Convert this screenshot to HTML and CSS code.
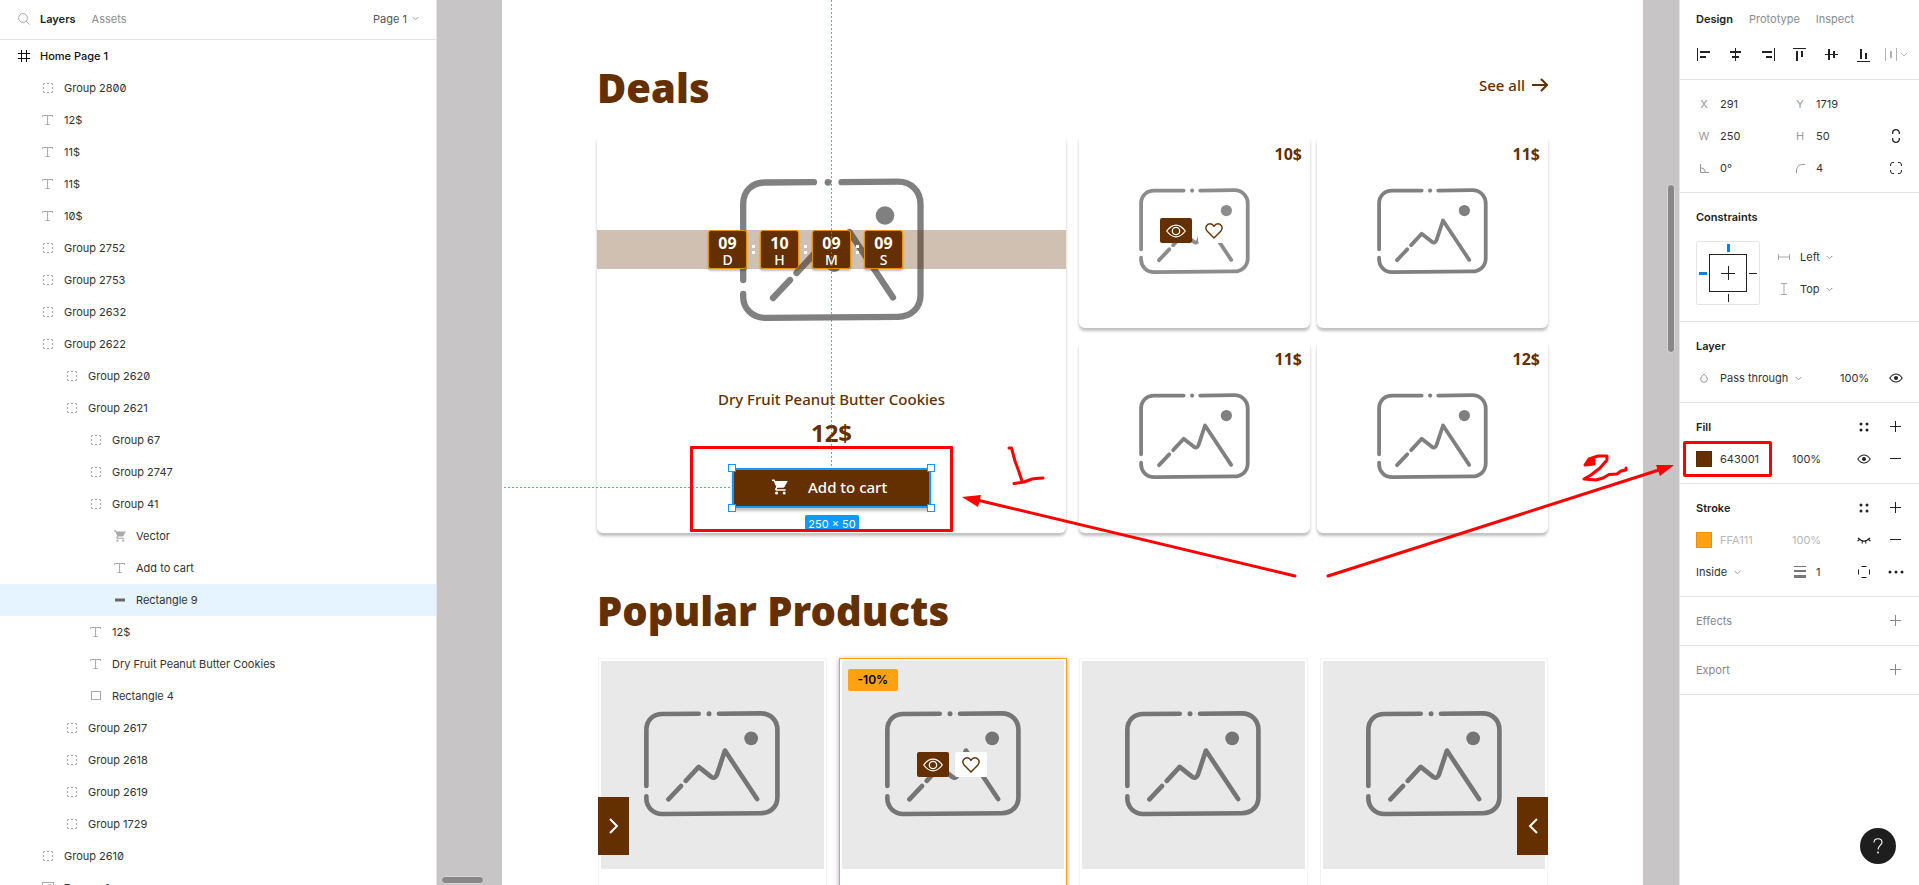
FILE: index.html
```html
<!DOCTYPE html>
<html lang="en">
<head>
<meta charset="utf-8">
<title>Home Page 1</title>
<link rel="stylesheet" href="styles.css">
</head>
<body>
<svg class="sprite" aria-hidden="true">
  <symbol id="i-group" viewBox="0 0 12 12"><path d="M1.500 3V1.500H3M5 1.500h2M9 1.500h1.500V3M10.500 5v2M10.500 9v1.500H9M7 10.500H5M3 10.500H1.500V9M1.500 7V5" fill="none" stroke="currentColor"/></symbol>
  <symbol id="i-text" viewBox="0 0 12 12"><path d="M.5 3V1.500h10V3M5.500 1.500v9M3.500 10.500h4" fill="none" stroke="currentColor"/></symbol>
  <symbol id="i-frame" viewBox="0 0 12 12"><path d="M3.500 0v12M8.500 0v12M0 3.500h12M0 8.500h12" fill="none" stroke="currentColor"/></symbol>
  <symbol id="i-rect" viewBox="0 0 12 12"><rect x="1.500" y="1.500" width="9" height="8" fill="none" stroke="currentColor"/></symbol>
  <symbol id="i-bar" viewBox="0 0 12 12"><path d="M1 6h10" fill="none" stroke="currentColor" stroke-width="3"/></symbol>
  <symbol id="i-image" viewBox="0 0 12 12"><rect x=".5" y=".5" width="11" height="11" fill="none" stroke="currentColor"/><circle cx="8" cy="4" r="1.500" fill="none" stroke="currentColor"/><path d="M1 10l3-4 4 5" fill="none" stroke="currentColor"/></symbol>
  <symbol id="i-cart" viewBox="1 2 21 20"><path d="M7 18a2 2 0 1 0 0 4 2 2 0 0 0 0-4zM1 2v2h2l3.600 7.590-1.350 2.450C4.500 15.400 5.500 17 7 17h12v-2H7.420l-.2-.3.900-1.700h7.450c.75 0 1.410-.41 1.750-1.030L21.700 4H5.210l-.94-2zM17 18a2 2 0 1 0 0 4 2 2 0 0 0 0-4z" fill="currentColor"/></symbol>
  <symbol id="i-search" viewBox="0 0 12 12"><circle cx="5" cy="5" r="4.400" fill="none" stroke="currentColor"/><path d="M8.200 8.200l3.400 3.400" fill="none" stroke="currentColor"/></symbol>
  <symbol id="i-chevron" viewBox="0 0 7 5"><path d="M.6.9L3.500 3.800 6.400.9" fill="none" stroke="currentColor"/></symbol>
  <symbol id="i-photo" viewBox="0 0 184 143">
    <g fill="none" stroke="currentColor" stroke-width="6.300" stroke-linecap="round" stroke-linejoin="round">
      <path d="M3.200 102V26C3.200 13 12 4.500 25 4.500L74 4.200M101.500 4.200L158 3.700C171 3.700 180.500 13 180.500 26V117C180.500 130 171 138.500 158 138.800L25 139.800C12 139.800 3.200 130 3.200 119V116"/>
      <path d="M33 120L50 102M56.500 95L74 76 91 89.500Q96 93 98.500 87L109.500 54 153 119.500"/>
    </g>
    <circle cx="88" cy="4.300" r="3.400" fill="currentColor"/><circle cx="145" cy="37.500" r="9.300" fill="currentColor"/>
  </symbol>
  <symbol id="i-view" viewBox="0 0 20 14"><path d="M.7 7Q5 1.200 10 1.200T19.300 7Q15 12.800 10 12.800T.7 7z" fill="none" stroke="currentColor" stroke-width="1.200"/><circle cx="10" cy="7" r="3.700" fill="none" stroke="currentColor" stroke-width="1.300"/></symbol>
  <symbol id="i-heart" viewBox="0 0 18 16"><path d="M9 15L2.300 8.300C-.8 4.600 2 .8 5 .8c1.800 0 3.200 1 4 2.500C9.800 1.800 11.200.8 13 .8c3 0 5.800 3.800 2.700 7.500z" fill="none" stroke="currentColor" stroke-width="1.400" stroke-linejoin="round"/></symbol>
  <symbol id="i-eye" viewBox="0 0 14 10"><path d="M.8 5Q3.500 1 7 1T13.200 5Q10.500 9 7 9T.8 5z" fill="none" stroke="currentColor" stroke-width="1.100"/><circle cx="7" cy="5" r="2" fill="currentColor"/></symbol>
  <symbol id="i-eye-off" viewBox="0 0 14 10"><path d="M1 3Q7 9 13 3M2.500 4.500L.5 6M5.500 6L5 8.500M8.500 6L9 8.500M11.500 4.500L13.500 6" fill="none" stroke="currentColor" stroke-width="1.200"/></symbol>
  <symbol id="i-plus" viewBox="0 0 12 12"><path d="M5.500 0v11M0 5.500h11" stroke="currentColor"/></symbol>
  <symbol id="i-minus" viewBox="0 0 12 12"><path d="M0 5.500h11" stroke="currentColor"/></symbol>
  <symbol id="i-styles" viewBox="0 0 10 10"><g fill="currentColor"><circle cx="2" cy="2" r="1.500"/><circle cx="8" cy="2" r="1.500"/><circle cx="2" cy="8" r="1.500"/><circle cx="8" cy="8" r="1.500"/></g></symbol>
</svg>

<div class="editor">
  <aside class="layers-panel">
    <header class="layers-head">
      <button class="tool" aria-label="Search"><svg class="s12"><use href="#i-search"/></svg></button>
      <button class="tab tab-on">Layers</button>
      <button class="tab">Assets</button>
      <button class="tab page-pick">Page 1 <svg class="chev"><use href="#i-chevron"/></svg></button>
    </header>
    <ul class="tree">
      <li class="layer root"><svg class="s12"><use href="#i-frame"/></svg>Home Page 1</li>
      <li class="layer d1"><svg class="s12"><use href="#i-group"/></svg>Group 2800</li>
      <li class="layer d1"><svg class="s12"><use href="#i-text"/></svg>12$</li>
      <li class="layer d1"><svg class="s12"><use href="#i-text"/></svg>11$</li>
      <li class="layer d1"><svg class="s12"><use href="#i-text"/></svg>11$</li>
      <li class="layer d1"><svg class="s12"><use href="#i-text"/></svg>10$</li>
      <li class="layer d1"><svg class="s12"><use href="#i-group"/></svg>Group 2752</li>
      <li class="layer d1"><svg class="s12"><use href="#i-group"/></svg>Group 2753</li>
      <li class="layer d1"><svg class="s12"><use href="#i-group"/></svg>Group 2632</li>
      <li class="layer d1"><svg class="s12"><use href="#i-group"/></svg>Group 2622</li>
      <li class="layer d2"><svg class="s12"><use href="#i-group"/></svg>Group 2620</li>
      <li class="layer d2"><svg class="s12"><use href="#i-group"/></svg>Group 2621</li>
      <li class="layer d3"><svg class="s12"><use href="#i-group"/></svg>Group 67</li>
      <li class="layer d3"><svg class="s12"><use href="#i-group"/></svg>Group 2747</li>
      <li class="layer d3"><svg class="s12"><use href="#i-group"/></svg>Group 41</li>
      <li class="layer d4"><svg class="s12"><use href="#i-cart"/></svg>Vector</li>
      <li class="layer d4"><svg class="s12"><use href="#i-text"/></svg>Add to cart</li>
      <li class="layer d4 selected"><svg class="s12"><use href="#i-bar"/></svg>Rectangle 9</li>
      <li class="layer d3"><svg class="s12"><use href="#i-text"/></svg>12$</li>
      <li class="layer d3"><svg class="s12"><use href="#i-text"/></svg>Dry Fruit Peanut Butter Cookies</li>
      <li class="layer d3"><svg class="s12"><use href="#i-rect"/></svg>Rectangle 4</li>
      <li class="layer d2"><svg class="s12"><use href="#i-group"/></svg>Group 2617</li>
      <li class="layer d2"><svg class="s12"><use href="#i-group"/></svg>Group 2618</li>
      <li class="layer d2"><svg class="s12"><use href="#i-group"/></svg>Group 2619</li>
      <li class="layer d2"><svg class="s12"><use href="#i-group"/></svg>Group 1729</li>
      <li class="layer d1"><svg class="s12"><use href="#i-group"/></svg>Group 2610</li>
      <li class="layer d1 strong"><svg class="s12"><use href="#i-image"/></svg>Banner 1</li>
    </ul>
  </aside>

  <main class="canvas">
    <div class="artboard">
      <section class="deals">
        <header class="section-head">
          <h2 class="title">Deals</h2>
          <a class="see-all" href="#">See all
            <svg width="16" height="14" viewBox="0 0 16 14"><path d="M0 7h15M9 1l6 6-6 6" fill="none" stroke="currentColor" stroke-width="2"/></svg></a>
        </header>
        <div class="deal-grid">
          <article class="card hero">
            <div class="hero-media">
              <svg class="photo photo-l"><use href="#i-photo"/></svg>
              <div class="timer">
                <div class="unit"><b>09</b>D</div><span class="colon"></span>
                <div class="unit"><b>10</b>H</div><span class="colon"></span>
                <div class="unit"><b>09</b>M</div><span class="colon"></span>
                <div class="unit"><b>09</b>S</div>
              </div>
            </div>
            <h3 class="name">Dry Fruit Peanut Butter Cookies</h3>
            <p class="hero-price">12$</p>
            <div class="buy">
              <button class="add"><svg width="16" height="16"><use href="#i-cart"/></svg>Add to cart</button>
              <span class="guide-v"></span><span class="guide-h"></span>
              <span class="selection"><i class="h tl"></i><i class="h tr"></i><i class="h bl"></i><i class="h br"></i></span>
              <span class="size">250 × 50</span>
              <span class="mark mark-button"></span>
            </div>
          </article>
          <article class="card small"><svg class="photo photo-s light"><use href="#i-photo"/></svg><p class="price">10$</p>
            <div class="actions"><button class="act act-view" aria-label="View"><svg width="22" height="14"><use href="#i-view"/></svg></button><button class="act" aria-label="Like"><svg width="18" height="16"><use href="#i-heart"/></svg></button></div></article>
          <article class="card small"><svg class="photo photo-s"><use href="#i-photo"/></svg><p class="price">11$</p></article>
          <article class="card small"><svg class="photo photo-s"><use href="#i-photo"/></svg><p class="price">11$</p></article>
          <article class="card small"><svg class="photo photo-s"><use href="#i-photo"/></svg><p class="price">12$</p></article>
        </div>
      </section>
      <section class="popular">
        <h2 class="title">Popular Products</h2>
        <div class="products">
          <article class="product"><div class="thumb"><svg class="photo photo-m"><use href="#i-photo"/></svg></div></article>
          <article class="product featured"><div class="thumb"><svg class="photo photo-m"><use href="#i-photo"/></svg></div>
            <span class="discount">-10%</span>
            <div class="actions"><button class="act act-view" aria-label="View"><svg width="22" height="14"><use href="#i-view"/></svg></button><button class="act" aria-label="Like"><svg width="18" height="16"><use href="#i-heart"/></svg></button></div></article>
          <article class="product"><div class="thumb"><svg class="photo photo-m"><use href="#i-photo"/></svg></div></article>
          <article class="product"><div class="thumb"><svg class="photo photo-m"><use href="#i-photo"/></svg></div></article>
          <button class="slide slide-l" aria-label="Next"><svg width="10" height="16" viewBox="0 0 10 16"><path d="M1 1l7 7-7 7" fill="none" stroke="currentColor" stroke-width="2"/></svg></button>
          <button class="slide slide-r" aria-label="Previous"><svg width="10" height="16" viewBox="0 0 10 16"><path d="M9 1L2 8l7 7" fill="none" stroke="currentColor" stroke-width="2"/></svg></button>
        </div>
      </section>
    </div>
    <span class="scroll scroll-v"></span><span class="scroll scroll-h"></span>
  </main>

  <aside class="design-panel">
    <nav class="design-tabs"><button class="tab tab-on">Design</button><button class="tab">Prototype</button><button class="tab">Inspect</button></nav>
    <section class="align">
      <button class="tool" aria-label="Align left"><svg width="14" height="14"><path d="M.5 0v13" class="ln"/><path d="M3 4h10M3 9h6" class="th"/></svg></button>
      <button class="tool" aria-label="Align centre"><svg width="14" height="14"><path d="M6.500 0v13" class="ln"/><path d="M1 4h11M3 9h7" class="th"/></svg></button>
      <button class="tool" aria-label="Align right"><svg width="14" height="14"><path d="M13.500 0v13" class="ln"/><path d="M1 4h10M5 9h6" class="th"/></svg></button>
      <button class="tool" aria-label="Align top"><svg width="14" height="14"><path d="M0 .5h13" class="ln"/><path d="M4 3v10M9 3v6" class="th"/></svg></button>
      <button class="tool" aria-label="Align middle"><svg width="14" height="14"><path d="M0 6.500h13" class="ln"/><path d="M4 1v11M9 3v7" class="th"/></svg></button>
      <button class="tool" aria-label="Align bottom"><svg width="14" height="14"><path d="M0 13.500h13" class="ln"/><path d="M4 1v10M9 5v6" class="th"/></svg></button>
      <button class="tool faint" aria-label="Distribute"><svg width="22" height="14"><path d="M.5 0v13M11.500 0v13M16 5l3 3 3-3" class="ln"/><path d="M6 3v7" class="th"/></svg></button>
    </section>
    <section class="section">
      <div class="row">
        <label class="key" for="fx">X</label><input class="val w2" id="fx" value="291">
        <label class="key" for="fy">Y</label><input class="val w2" id="fy" value="1719">
      </div>
      <div class="row">
        <label class="key" for="fw">W</label><input class="val w2" id="fw" value="250">
        <label class="key" for="fh">H</label><input class="val w2" id="fh" value="50">
        <button class="tool" aria-label="Constrain proportions"><svg width="8" height="14"><path d="M.7 5V3.700a3.300 3 0 0 1 6.600 0V5M.7 9v1.300a3.300 3 0 0 0 6.600 0V9" class="dash"/></svg></button>
      </div>
      <div class="row">
        <label class="key" for="fr" aria-label="Rotation"><svg width="9" height="9"><path d="M.5 0v8.500H9M.5 3.500Q5 4 5.500 8.500" class="ln"/></svg></label><input class="val w2" id="fr" value="0°">
        <label class="key" for="fc" aria-label="Corner radius"><svg width="9" height="9"><path d="M.5 9V7Q.5.500 7 .5h2" class="ln"/></svg></label><input class="val w2" id="fc" value="4">
        <button class="tool" aria-label="Independent corners"><svg width="12" height="12"><path d="M.5 4V3Q.5.500 3 .5h1M8 .5h1Q11.500.500 11.500 3v1M11.500 8v1q0 2.500-2.500 2.500H8M4 11.500H3Q.5 11.500.500 9V8" class="ln"/></svg></button>
      </div>
    </section>
    <section class="section">
      <div class="row"><h4 class="head">Constraints</h4></div>
      <div class="constraints">
        <svg class="pin-box" width="64" height="64"><rect x=".5" y=".5" width="63" height="63" rx="2" fill="#fff" stroke="#e5e5e5"/><rect x="13.500" y="13.500" width="37" height="37" fill="none" stroke="#222"/><path d="M25 32.500h14M32.500 25v14M53 32.500h8M32.500 53v8" stroke="#222"/><path d="M32.500 3v8M3 32.500h8" stroke="#0a80e8" stroke-width="3"/></svg>
        <div class="axes">
          <div class="axis"><svg width="12" height="6"><path d="M.5 0v6M11.500 0v6M0 3h12" class="ln"/></svg><select class="pick" aria-label="Horizontal"><option>Left</option></select><svg class="chev"><use href="#i-chevron"/></svg></div>
          <div class="axis"><svg width="12" height="12"><path d="M3 .5h6M3 11.500h6M6 0v12" class="ln"/></svg><select class="pick" aria-label="Vertical"><option>Top</option></select><svg class="chev"><use href="#i-chevron"/></svg></div>
        </div>
      </div>
    </section>
    <section class="section">
      <div class="row"><h4 class="head">Layer</h4></div>
      <div class="row">
        <span class="key"><svg width="8" height="10"><path d="M4 1Q.6 4.300.600 6a3.400 3.300 0 0 0 6.800 0Q7.400 4.300 4 1z" class="ln"/></svg></span>
        <div class="combo"><select class="pick" aria-label="Blend mode"><option>Pass through</option></select><svg class="chev"><use href="#i-chevron"/></svg></div>
        <input class="val opacity" aria-label="Layer opacity" value="100%">
        <button class="tool" aria-label="Hide layer"><svg width="14" height="10"><use href="#i-eye"/></svg></button>
      </div>
    </section>
    <section class="section">
      <div class="row"><h4 class="head">Fill</h4><button class="tool" aria-label="Fill styles"><svg width="10" height="10"><use href="#i-styles"/></svg></button><button class="tool" aria-label="Add fill"><svg class="s12"><use href="#i-plus"/></svg></button></div>
      <div class="row">
        <span class="key"><span class="swatch brown"></span></span><input class="val hex" aria-label="Fill colour" value="643001"><input class="val w2" aria-label="Fill opacity" value="100%">
        <button class="tool" aria-label="Hide fill"><svg width="14" height="10"><use href="#i-eye"/></svg></button><button class="tool" aria-label="Remove fill"><svg class="s12"><use href="#i-minus"/></svg></button>
        <span class="mark mark-fill"></span>
      </div>
    </section>
    <section class="section">
      <div class="row"><h4 class="head">Stroke</h4><button class="tool" aria-label="Stroke styles"><svg width="10" height="10"><use href="#i-styles"/></svg></button><button class="tool" aria-label="Add stroke"><svg class="s12"><use href="#i-plus"/></svg></button></div>
      <div class="row off">
        <span class="key"><span class="swatch orange"></span></span><input class="val hex" aria-label="Stroke colour" value="FFA111"><input class="val w2" aria-label="Stroke opacity" value="100%">
        <button class="tool" aria-label="Show stroke"><svg width="14" height="10"><use href="#i-eye-off"/></svg></button><button class="tool" aria-label="Remove stroke"><svg class="s12"><use href="#i-minus"/></svg></button>
      </div>
      <div class="row">
        <div class="combo inset"><select class="pick" aria-label="Stroke position"><option>Inside</option></select><svg class="chev"><use href="#i-chevron"/></svg></div>
        <label class="key dark" for="sw" aria-label="Stroke width"><svg width="12" height="12"><path d="M0 .5h12" class="ln"/><path d="M0 5h12" class="th"/><path d="M0 10.500h12" stroke="currentColor" stroke-width="3"/></svg></label><input class="val w1" id="sw" value="1">
        <button class="tool" aria-label="Stroke sides"><svg width="12" height="12"><path d="M3.500.500h5M3.500 11.500h5M.5 3.500v5M11.500 3.500v5" class="ln"/></svg></button>
        <button class="tool" aria-label="More"><svg width="16" height="4"><g fill="currentColor"><circle cx="2" cy="2" r="1.500"/><circle cx="8" cy="2" r="1.500"/><circle cx="14" cy="2" r="1.500"/></g></svg></button>
      </div>
    </section>
    <section class="section"><div class="row"><h4 class="head idle">Effects</h4><button class="tool idle" aria-label="Add effect"><svg class="s12"><use href="#i-plus"/></svg></button></div></section>
    <section class="section"><div class="row"><h4 class="head idle">Export</h4><button class="tool idle" aria-label="Add export"><svg class="s12"><use href="#i-plus"/></svg></button></div></section>
    <button class="help" aria-label="Help"><svg width="10" height="16" viewBox="0 0 10 16"><path d="M1 4.500C1 2 2.800.700 5 .7S9 2 9 4.300C9 7.300 5 7.500 5 11.500" fill="none" stroke="currentColor" stroke-width="1.100"/><circle cx="5" cy="14.500" r=".9" fill="currentColor"/></svg></button>
  </aside>

  <svg class="notes" width="720" height="140" viewBox="960 445 720 140" aria-hidden="true">
    <g fill="none" stroke="#f00" stroke-width="3" stroke-linecap="round" stroke-linejoin="round">
      <path d="M975 499.500L1295 576M1328 576L1662 469"/>
      <path d="M1009 448H1011.500L1015 461 1019 472 1022 481M1014 483.500L1024 482 1032 479 1036 478.500 1043 478"/>
      <path d="M1585 465L1589 459 1598 456 1607 456 1607 460 1600 468 1591 475 1584 479 1596 480 1603 478 1609 474.500 1617 474 1621 471 1626 470V468M1585 465L1594 464 1594 459 1589 463"/>
    </g>
    <path d="M962 497L981 495 978 507zM1674 465L1656 465 1660 476z" fill="#f00"/>
  </svg>
</div>
</body>
</html>
```

FILE: styles.css
```css
* { box-sizing: border-box; }
body { margin: 0; overflow: hidden; font: 11px/16px Inter, sans-serif; color: #333; background: #fff; }
.sprite { position: absolute; width: 0; height: 0; }
svg { display: block; flex: none; }
h2, h3, h4, p, ul { margin: 0; padding: 0; }
button, input, select { font: inherit; color: inherit; border: 0; background: none; padding: 0; margin: 0; }
.ln { fill: none; stroke: currentColor; }
.th { fill: none; stroke: currentColor; stroke-width: 2; }
.dash { fill: none; stroke: currentColor; stroke-width: 1.3; }

.editor { position: relative; display: flex; height: 100vh; overflow: hidden; }
.s12 { width: 12px; height: 12px; }
.chev { width: 7px; height: 5px; color: #999; }
.tab { color: #8c8c8c; }
.tab-on { color: #222; font-weight: 600; }
.tool { display: flex; align-items: center; justify-content: center; flex: none; width: 32px; height: 32px; color: #222; }
.idle, .tool.idle { color: #888; }
.tool.faint { color: #b3b3b3; }

.layers-panel { flex: none; width: 437px; border-right: 1px solid #e5e5e5; overflow: hidden; }
.layers-head { display: flex; align-items: center; height: 40px; padding: 0 17px 2px 8px; border-bottom: 1px solid #e5e5e5; }
.layers-head .tool { color: #aaa; }
.layers-head .tab { margin-right: 16px; }
.layers-head .page-pick { display: flex; align-items: center; gap: 5px; margin: 0 0 0 auto; color: #555; }
.tree { list-style: none; }
.layer { display: flex; align-items: center; gap: 10px; height: 32px; padding-left: 18px; font-feature-settings: "zero"; }
.layer svg { color: #aaa; }
.root { font-weight: 500; color: #111; }
.root svg { color: #111; }
.strong { font-weight: 600; }
.d1 { padding-left: 42px; }
.d2 { padding-left: 66px; }
.d3 { padding-left: 90px; }
.d4 { padding-left: 114px; }
.selected { background: #e5f4ff; }
.selected svg { color: #666; }

.canvas { position: relative; flex: 1; min-width: 0; padding: 0 36px 0 65px; background: #c7c5c6; overflow: hidden; }
.artboard { height: 100%; padding: 64px 95px 0; background: #fff; color: #643001; font-family: "Noto Sans", sans-serif; overflow: hidden; }
.section-head { display: flex; justify-content: space-between; height: 71px; }
.title { font: 900 40px/48px "Noto Sans", sans-serif; }
.see-all { display: flex; align-items: center; gap: 7px; height: 42px; font-size: 15px; font-weight: 500; color: inherit; text-decoration: none; }
.deal-grid { display: grid; grid-template-columns: 475fr 231fr 231fr; grid-template-rows: 193px 193px; column-gap: 7px; row-gap: 12px; }
.card { position: relative; border-radius: 6px; background: #fff; box-shadow: 0 3px 3px rgba(0, 0, 0, .25); }
.hero { grid-row: span 2; margin-right: 6px; text-align: center; }
.hero-media { position: relative; display: flex; justify-content: center; height: 252px; padding-top: 43px; }
.photo { color: #808080; }
.photo-l { width: 184px; height: 143px; }
.photo-s { width: 111px; height: 86px; }
.photo-m { width: 136px; height: 107px; color: #757575; }
.light { color: #8c8c8c; }
.timer { position: absolute; top: 95px; left: 0; right: 0; display: flex; justify-content: center; padding-right: 52px; background: rgba(100, 48, 1, .3); }
.unit { width: 39px; height: 39px; padding-top: 4px; border: 1px solid #e8900c; border-radius: 3px; background: #643001; color: #fff; font-size: 14px; line-height: 16px; font-weight: 500; box-shadow: 0 2px 2px rgba(0, 0, 0, .25); }
.unit b { display: block; font-size: 16px; line-height: 17px; }
.colon { align-self: center; width: 3px; height: 9px; margin: 0 5px; border: solid #fff; border-width: 3px 0; }
.name { font-size: 15px; line-height: 24px; font-weight: 500; }
.hero-price { margin-top: 6px; font-size: 24px; line-height: 32px; font-weight: 700; }
.buy { position: relative; width: 199px; height: 40px; margin: 19px auto 0; }
.add { display: flex; align-items: center; gap: 20px; width: 100%; height: 100%; padding: 0 0 2px 40px; border-radius: 3px; background: #643001; color: #fff; font-size: 15px; font-weight: 500; box-shadow: 0 3px 3px rgba(0, 0, 0, .25); }
.selection { position: absolute; inset: 0; border: 2px solid #0d99ff; }
.h { position: absolute; width: 8px; height: 8px; border: 1px solid #0d99ff; background: #fff; }
.tl { top: -6px; left: -6px; }
.tr { top: -6px; right: -6px; }
.bl { bottom: -6px; left: -6px; }
.br { bottom: -6px; right: -6px; }
.size { position: absolute; top: 47px; left: 73px; width: 54px; height: 17px; border-radius: 2px; background: #0d99ff; color: #fff; font: 11px/18px Inter, sans-serif; }
.guide-v { position: absolute; bottom: 100%; left: 99px; width: 1px; height: 600px; background: repeating-linear-gradient(#0d99ff 0 2px, transparent 2px 4px); opacity: .8; }
.guide-h { position: absolute; right: 100%; top: 19px; width: 600px; height: 1px; background: repeating-linear-gradient(90deg, #0d99ff 0 2px, transparent 2px 4px); opacity: .8; }
.mark { position: absolute; border: 3px solid #f00; pointer-events: none; }
.mark-button { inset: -22px -22px -24px -42px; border-radius: 1px; }
.small { display: flex; align-items: center; justify-content: center; padding-bottom: 2px; }
.price { position: absolute; top: 8px; right: 8px; font-size: 16px; line-height: 22px; font-weight: 700; }
.actions { position: absolute; display: flex; gap: 6px; }
.small .actions { left: 81px; top: 83px; }
.act { display: flex; align-items: center; justify-content: center; width: 32px; height: 25px; border-radius: 2px; background: #fff; color: #643001; }
.act-view { background: #643001; color: #fff; }

.popular { padding-top: 54px; }
.products { position: relative; display: grid; grid-template-columns: repeat(4, 1fr); gap: 12px; margin: 23px 0 0 1px; }
.product { position: relative; height: 320px; padding: 2px; border: 1px solid #f3f3f3; background: #fff; }
.featured { border-color: #ffa111; box-shadow: 0 1px 5px rgba(0, 0, 0, .35); }
.thumb { display: flex; align-items: center; justify-content: center; height: 208px; padding-bottom: 4px; background: #e9e9e9; }
.product .actions { left: 77px; top: 93px; }
.discount { position: absolute; top: 10px; left: 8px; padding: 0 10px; border-radius: 2px; background: #ffa111; color: #000; font: 600 12px/22px Inter, sans-serif; }
.slide { position: absolute; top: 139px; display: flex; align-items: center; justify-content: center; width: 31px; height: 58px; background: #643001; color: #fff; }
.slide-l { left: 0; }
.slide-r { right: 0; }

.scroll { position: absolute; border: 1px solid #d8d6d7; border-radius: 4px; background: #888; }
.scroll-v { right: 4px; top: 184px; width: 8px; height: 169px; }
.scroll-h { left: 4px; bottom: 1px; width: 43px; height: 8px; }

.design-panel { position: relative; flex: none; width: 240px; border-left: 1px solid #e5e5e5; background: #fff; }
.design-tabs { display: flex; align-items: center; gap: 16px; height: 39px; padding: 0 0 1px 16px; }
.align { display: flex; height: 41px; padding: 0 8px 8px; border-bottom: 1px solid #e5e5e5; }
.section { padding: 8px 7px 8px 8px; border-bottom: 1px solid #e5e5e5; }
.row { position: relative; display: flex; align-items: center; height: 32px; }
.key { display: flex; align-items: center; justify-content: center; width: 32px; flex: none; color: #999; }
.key.dark { color: #777; }
.val { min-width: 0; height: 32px; }
.w1 { width: 32px; }
.w2 { width: 64px; }
.hex { width: 72px; }
.hex + .w2 { width: 56px; }
.opacity { width: 40px; }
.head { flex: 1; padding-left: 8px; font-size: 11px; font-weight: 600; color: #222; }
.head.idle { font-weight: 400; color: #888; }
.combo { display: flex; align-items: center; gap: 6px; width: 120px; }
.combo.inset { width: 96px; padding-left: 8px; }
.pick { appearance: none; height: 32px; }
.constraints { display: flex; gap: 16px; padding: 8px; }
.axes { padding-left: 2px; }
.axis { display: flex; align-items: center; gap: 6px; height: 32px; color: #aaa; }
.axis .pick { margin-left: 4px; color: #333; }
.swatch { width: 16px; height: 16px; border: 1px solid rgba(0, 0, 0, .1); }
.brown { background: #643001; }
.orange { background: #ffa111; }
.off .val { color: #b8b8b8; }
.mark-fill { left: -5px; top: -2px; width: 89px; height: 36px; border-radius: 2px; }
.help { position: absolute; right: 23px; bottom: 21px; display: flex; align-items: center; justify-content: center; width: 36px; height: 36px; border-radius: 50%; background: #1e1e1e; color: #fff; }
.notes { position: absolute; left: 960px; top: 445px; pointer-events: none; }
```
